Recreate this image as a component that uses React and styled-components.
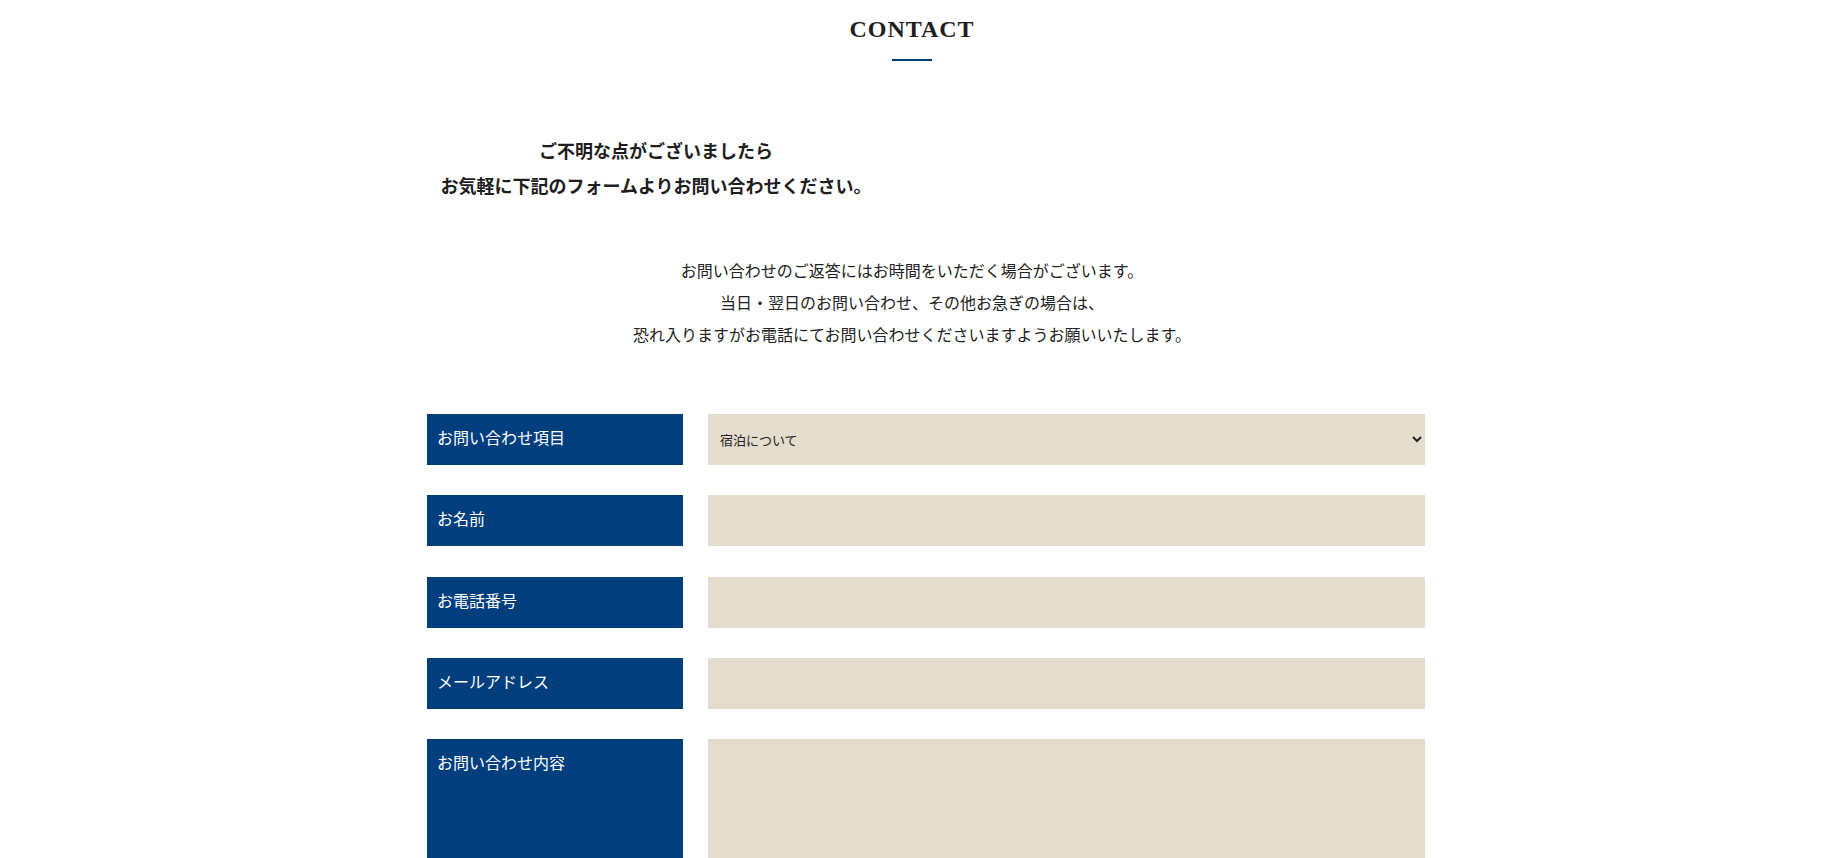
import React from "react";
import styled, { createGlobalStyle } from "styled-components";

const GlobalStyle = createGlobalStyle`
  body {
    margin: 0;
    background: #fff;
    color: #222;
    font-family: "Liberation Serif", "Noto Sans CJK JP", serif;
  }
`;

const Page = styled.div`
  padding-right: 13px;
`;

const Section = styled.section`
  width: 1000px;
  margin: 0 auto;
`;

const Title = styled.h2`
  margin: 0;
  padding-top: 11px;
  font-size: 24px;
  line-height: 36px;
  font-weight: 700;
  letter-spacing: 1px;
  text-align: center;
  color: #1e1e1e;
`;

const TitleBar = styled.div`
  width: 40px;
  height: 2px;
  margin: 12px auto 0;
  background: #003e7e;
`;

const Lead = styled.p`
  width: 488px;
  margin: 72px 0 0;
  font-family: "Noto Sans CJK JP", sans-serif;
  font-size: 18px;
  line-height: 35px;
  font-weight: 700;
  text-align: center;
  color: #1e1e1e;
`;

const Note = styled.p`
  margin: 51px 0 0;
  font-family: "Noto Sans CJK JP", sans-serif;
  font-size: 16px;
  line-height: 32px;
  text-align: center;
  color: #222;
`;

const Form = styled.form`
  width: 998px;
  margin: 64px 0 0 15px;
  display: flex;
  flex-direction: column;
  gap: 30.3px;
`;

const Row = styled.div`
  display: grid;
  grid-template-columns: 256px 1fr;
  column-gap: 25px;
  min-height: ${(p) => (p.$tall ? "260px" : "51px")};
`;

const Label = styled.label`
  background: #003e7e;
  color: #fff;
  font-family: "Noto Sans CJK JP", sans-serif;
  font-size: 16px;
  line-height: 24px;
  padding: 11px 10px 0;
`;

const fieldBase = `
  display: block;
  width: 100%;
  box-sizing: border-box;
  border: none;
  background: #e4dccd;
  color: #222;
  font-family: "Noto Sans CJK JP", sans-serif;
  outline: none;
`;

const Input = styled.input`
  ${fieldBase}
  height: 51px;
  padding: 0 12px;
  font-size: 14px;
`;

const Select = styled.select`
  ${fieldBase}
  height: 51px;
  padding: 0 8px;
  font-size: 13px;
`;

const TextArea = styled.textarea`
  ${fieldBase}
  height: 260px;
  padding: 12px;
  font-size: 14px;
  resize: none;
`;

export default function App() {
  return (
    <Page>
      <GlobalStyle />
      <Section>
        <Title>CONTACT</Title>
        <TitleBar />
        <Lead>
          ご不明な点がございましたら
          <br />
          お気軽に下記のフォームよりお問い合わせください。
        </Lead>
        <Note>
          お問い合わせのご返答にはお時間をいただく場合がございます。
          <br />
          当日・翌日のお問い合わせ、その他お急ぎの場合は、
          <br />
          恐れ入りますがお電話にてお問い合わせくださいますようお願いいたします。
        </Note>
        <Form>
          <Row>
            <Label htmlFor="type">お問い合わせ項目</Label>
            <Select id="type" defaultValue="stay">
              <option value="stay">宿泊について</option>
              <option value="other">その他</option>
            </Select>
          </Row>
          <Row>
            <Label htmlFor="name">お名前</Label>
            <Input id="name" type="text" />
          </Row>
          <Row>
            <Label htmlFor="tel">お電話番号</Label>
            <Input id="tel" type="tel" />
          </Row>
          <Row>
            <Label htmlFor="mail">メールアドレス</Label>
            <Input id="mail" type="email" />
          </Row>
          <Row $tall>
            <Label htmlFor="body">お問い合わせ内容</Label>
            <TextArea id="body" />
          </Row>
        </Form>
      </Section>
    </Page>
  );
}
